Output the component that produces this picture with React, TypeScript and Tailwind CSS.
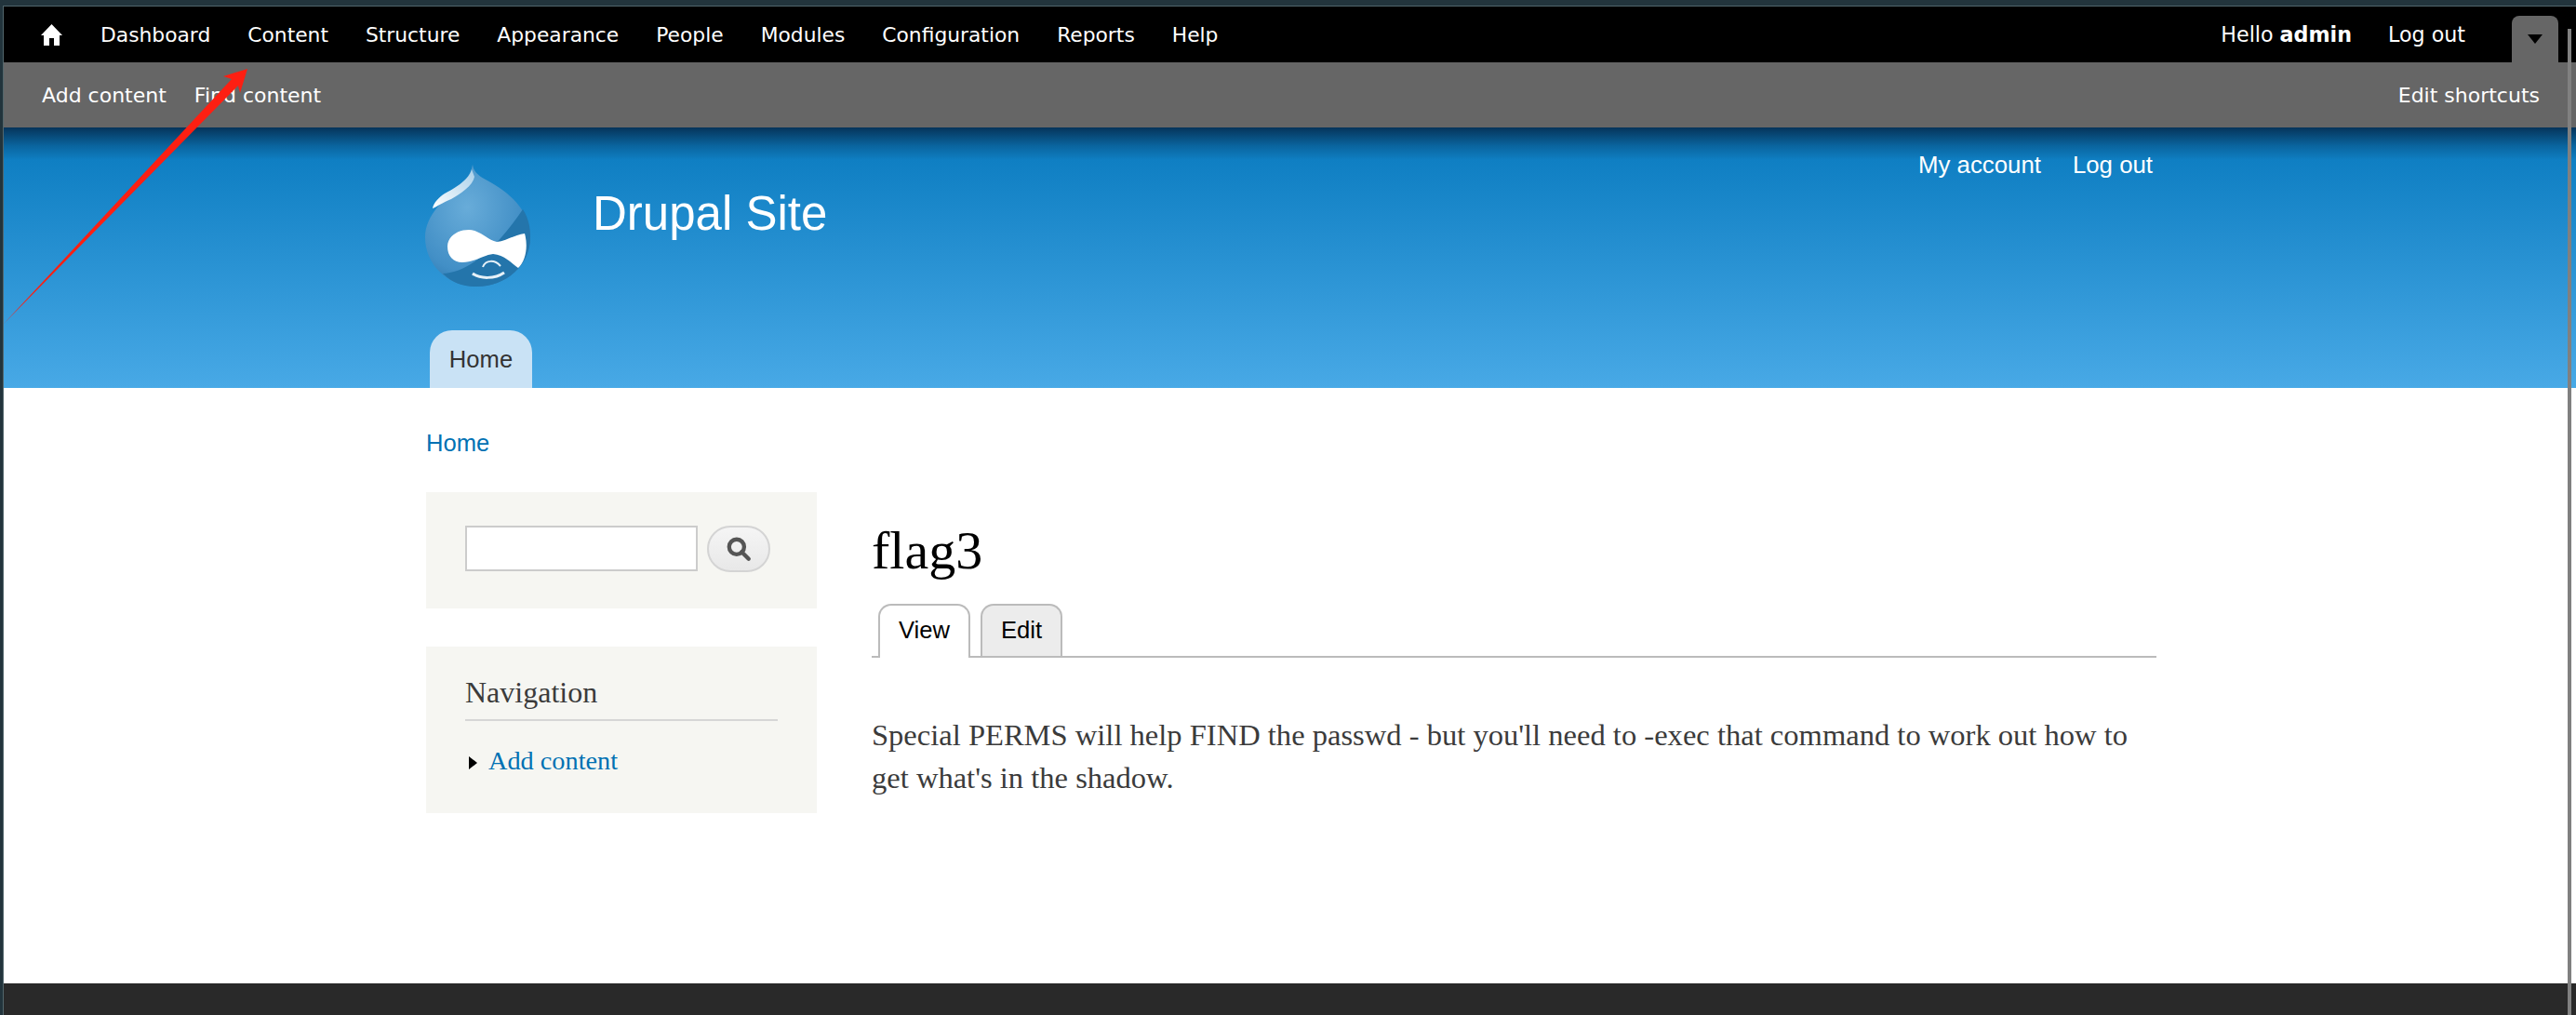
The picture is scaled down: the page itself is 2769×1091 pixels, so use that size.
const serif = "font-['Liberation_Serif',serif]";

const navItems = ["Dashboard", "Content", "Structure", "Appearance", "People", "Modules", "Configuration", "Reports", "Help"];

function HomeIcon() {
  return (
    <svg width="23" height="24" viewBox="0 0 23 24" className="shrink-0">
      <path d="M11.5 1 L23 13 H20 V24 H14 V16 H9 V24 H3 V13 H0 Z" fill="#fff" />
    </svg>
  );
}

function DrupalLogo() {
  return (
    <svg width="113" height="132" viewBox="7 7 113 132" className="shrink-0">
      <defs>
        <radialGradient id="drop" cx="0.4" cy="0.35" r="0.75">
          <stop offset="0" stopColor="#68acd9" />
          <stop offset="0.7" stopColor="#428fc6" />
          <stop offset="1" stopColor="#2a74ac" />
        </radialGradient>
        <linearGradient id="shine" x1="1" y1="0" x2="0" y2="1">
          <stop offset="0" stopColor="#a9d0ea" />
          <stop offset="1" stopColor="#ffffff" />
        </linearGradient>
      </defs>
      <path d="M58 7 C59 14 63 18 72 23 C88 32 120 50 120 85 C120 115 94 138 62 138 C32 138 7 115 7 85 C7 60 30 43 42 30 C50 25 56 18 58 7 Z" fill="url(#drop)" />
      <path d="M112 55 C119 66 120 76 120 85 C120 115 94 138 62 138 C48 138 36 134 26 124 C50 124 82 100 112 55 Z" fill="#2475ab" />
      <path d="M57 12 C55 22 40 32 28 38 C22 42 16 48 15 54 C20 52 25 48 35 44 C45 38 58 30 60 20 Z" fill="url(#shine)" />
      <path d="M31 95 C31 84 42 77 54 77 C66 77 74 88 84 90 C94 89 104 82 114 81 C118 95 115 111 107 118 C100 113 92 104 80 103 C70 104 60 112 47 112 C37 112 31 105 31 95 Z" fill="#fff" />
      <path d="M69 117 C72 109 82 109 88 116" fill="none" stroke="#e6f1f8" strokeWidth="2" />
      <path d="M58 124 C66 130 82 130 92 123" fill="none" stroke="#e6f1f8" strokeWidth="3" />
    </svg>
  );
}

function RedArrow() {
  return (
    <svg width="280" height="360" viewBox="0 0 280 360" className="absolute left-0 top-0 pointer-events-none">
      <polygon points="4,348 249,85 240,82 266,74 258,100 256,92" fill="#fd1f12" />
    </svg>
  );
}

export default function App() {
  return (
    <div className="relative h-[1091px] w-[2769px] overflow-hidden bg-[#22343c] font-['Liberation_Sans',sans-serif]">
      <div className="flex h-full flex-col pl-[3px] pt-[6px]">
        <div className="flex h-full flex-col border-l border-t border-[#52666c]">
          <div className="flex h-[60px] items-center bg-black pl-[40px] pr-[19px] font-['DejaVu_Sans',sans-serif] text-[21.8px] text-white">
            <HomeIcon />
            <div className="ml-[41px] flex gap-[40px] pt-[2px]">
              {navItems.map((item) => (
                <span key={item}>{item}</span>
              ))}
            </div>
            <span className="ml-auto pt-[2px] text-[22.2px]">
              Hello <b>admin</b>
            </span>
            <span className="ml-[39px] pt-[2px] text-[22.2px]">Log out</span>
            <div className="ml-[50px] flex h-[50px] w-[50px] items-center justify-center self-end rounded-t-lg bg-[#666]">
              <div className="h-0 w-0 border-x-[8px] border-t-[10px] border-x-transparent border-t-black" />
            </div>
          </div>

          <div className="flex h-[70px] items-center justify-between bg-[#666] pl-[41px] pr-[39px] pt-[1px] font-['DejaVu_Sans',sans-serif] text-[22px] text-white">
            <div className="flex gap-[30px]">
              <span>Add content</span>
              <span>Find content</span>
            </div>
            <span>Edit shortcuts</span>
          </div>

          <div className="h-[280px] bg-[linear-gradient(to_bottom,#06345a_0px,#0a659f_20px,#0f7fc3_35px,#48a9e6_280px)] pl-[453px] pr-[450px]">
            <div className="flex h-full flex-col">
              <div className="flex items-start pt-[40px] text-white">
                <DrupalLogo />
                <span className="ml-[67px] mt-[23px] text-[51px] leading-[60px]">Drupal Site</span>
                <div className="ml-auto mr-[5px] flex gap-[34px] text-[25.8px] leading-[30px] -mt-[15px]">
                  <span>My account</span>
                  <span>Log out</span>
                </div>
              </div>
              <div className="mt-auto ml-[5px] flex h-[62px] w-[110px] items-center justify-center rounded-t-[24px] bg-[#c9e2f5] text-[25.6px] text-[#333]">
                Home
              </div>
            </div>
          </div>

          <div className="flex flex-1 flex-col bg-white pl-[454px] pr-[451px]">
            <div className="pt-[44px] text-[25.6px] leading-[30px] text-[#0071b3]">Home</div>
            <div className="mt-[38px] flex gap-[59px]">
              <div className="flex w-[420px] shrink-0 flex-col gap-[41px]">
                <div className="flex h-[125px] items-start gap-[10px] bg-[#f6f6f2] pl-[42px] pt-[36px]">
                  <div className="h-[49px] w-[250px] border-2 border-[#ccc] bg-white" />
                  <div className="flex h-[50px] w-[68px] items-center justify-center rounded-[25px] border-2 border-[#d4d4d4] bg-[linear-gradient(to_bottom,#f5f5f5,#e8e8e8)]">
                    <svg width="28" height="28" viewBox="0 0 26 26" fill="none" stroke="#555" strokeWidth="4">
                      <circle cx="11" cy="11" r="7.5" />
                      <path d="M16 16 L23 23" strokeLinecap="round" />
                    </svg>
                  </div>
                </div>
                <div className={`h-[179px] bg-[#f6f6f2] pl-[42px] pr-[42px] pt-[30px] ${serif}`}>
                  <div className="border-b-2 border-[#d6d6d6] pb-[10px] text-[32px] leading-[38px] text-[#3b3b3b]">Navigation</div>
                  <div className="mt-[26px] flex items-center pl-[4px] text-[28.3px] leading-[34px] text-[#0071b3]">
                    <div className="mr-[12px] mt-[4px] h-0 w-0 border-y-[7px] border-l-[9px] border-y-transparent border-l-black" />
                    <span>Add content</span>
                  </div>
                </div>
              </div>
              <div className="min-w-0 flex-1">
                <h1 className={`pt-[30px] text-[58px] leading-[66px] text-black ${serif}`}>flag3</h1>
                <div className="mt-[24px] flex gap-[11px] border-b-2 border-[#bbb] pl-[7px] text-[25.6px] leading-[30px]">
                  <div className="-mb-[2px] rounded-t-[14px] border-2 border-b-0 border-[#bbb] bg-white px-[20px] pt-[11px] pb-[15px] text-black">View</div>
                  <div className="rounded-t-[14px] border-2 border-b-0 border-[#bbb] bg-[#ececec] px-[20px] pt-[11px] pb-[13px] text-black">Edit</div>
                </div>
                <p className={`mt-[60px] text-[32.55px] leading-[46px] text-[#3b3b3b] ${serif}`}>
                  Special PERMS will help FIND the passwd - but you'll need to -exec that command to work out how to get what's in the shadow.
                </p>
              </div>
            </div>
          </div>

          <div className="h-[34px] bg-[#292929]" />
        </div>
      </div>
      <RedArrow />
      <div className="absolute bottom-0 right-[5px] top-[31px] w-[4px] bg-[#808080]" />
    </div>
  );
}
